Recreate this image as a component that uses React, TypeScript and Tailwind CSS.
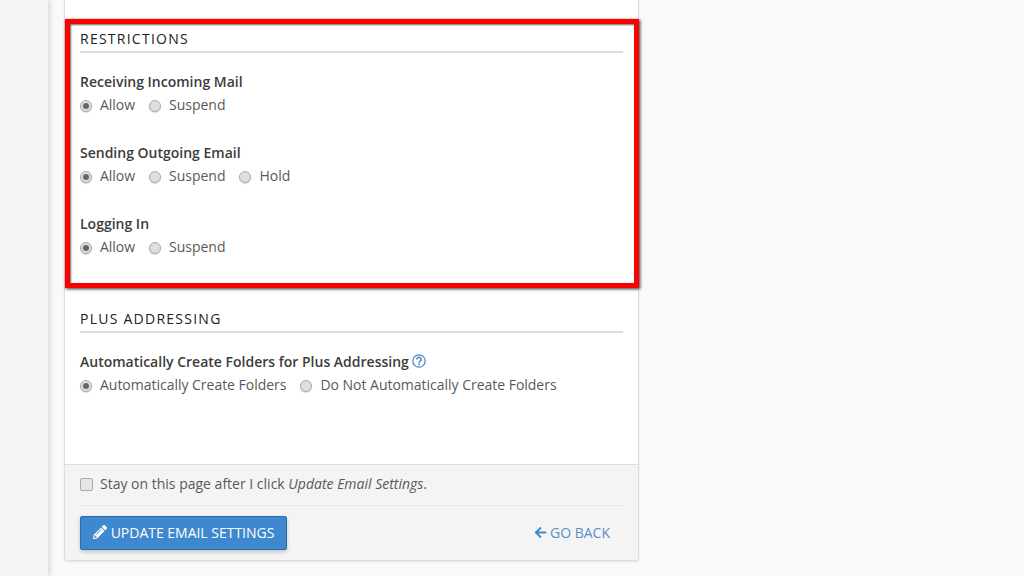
import { FaArrowLeft, FaPencilAlt } from "react-icons/fa";

const Radio = ({ label, checked = false }: { label: string; checked?: boolean }) => (
  <label className="flex items-center">
    <span className="mt-[4px] flex h-[12px] w-[12px] items-center justify-center rounded-full border border-[#ababab] bg-[#dedede] shadow-[0_1px_1px_rgba(0,0,0,0.15)]">
      {checked ? <span className="h-[6px] w-[6px] rounded-full bg-[#666]" /> : null}
    </span>
    <span className="ml-[8px] tracking-[-0.02px]">{label}</span>
  </label>
);

const Field = ({ label, children }: { label: React.ReactNode; children: React.ReactNode }) => (
  <div className="h-[71px]">
    <div className="flex h-[20px] items-center font-semibold text-[#3c3c3c]">{label}</div>
    <div className="mt-[3px] flex h-[20px] items-center gap-[14px] text-[#595959]">{children}</div>
  </div>
);

const SectionTitle = ({ children }: { children: React.ReactNode }) => (
  <h2 className="flex h-[26px] items-center border-b-2 border-[#ddd] pb-[2px] text-[14px] font-medium tracking-[1.25px] text-[#222]">
    {children}
  </h2>
);

export default function App() {
  return (
    <div className="flex h-[576px] overflow-hidden bg-[#f9f9f9] font-['Open_Sans',sans-serif] text-[14px]">
      <div className="h-full w-[48px] shrink-0 bg-[#f4f4f4] shadow-[3px_0_4px_rgba(0,0,0,0.1)]" />
      <div className="relative ml-[16px] h-[561px] w-[575px] shrink-0">
        <div className="flex h-full flex-col rounded-b-[3px] border-x border-b border-[#ddd] bg-white shadow-[0_1px_2px_rgba(0,0,0,0.08)]">
          <div className="flex-1 px-[15px] pt-[27px]">
            <SectionTitle>RESTRICTIONS</SectionTitle>
            <div className="mt-[18px]">
              <Field label="Receiving Incoming Mail">
                <Radio label="Allow" checked />
                <Radio label="Suspend" />
              </Field>
              <Field label="Sending Outgoing Email">
                <Radio label="Allow" checked />
                <Radio label="Suspend" />
                <Radio label="Hold" />
              </Field>
              <Field label="Logging In">
                <Radio label="Allow" checked />
                <Radio label="Suspend" />
              </Field>
            </div>
            <div className="mt-[23px]">
              <SectionTitle>PLUS ADDRESSING</SectionTitle>
            </div>
            <div className="mt-[18px]">
              <Field
                label={
                  <>
                    Automatically Create Folders for Plus Addressing
                    <svg viewBox="0 0 14 14" className="ml-[3px] h-[14px] w-[14px] text-[#4a8cca]" fill="none" stroke="currentColor">
                      <circle cx="7" cy="7" r="6.2" strokeWidth="1.3" />
                      <path d="M4.9 5.5a2.1 2.1 0 1 1 3.3 1.6c-.8.5-1.2.9-1.2 1.6" strokeWidth="1.6" />
                      <path d="M7 9.6v1.6" strokeWidth="1.6" />
                    </svg>
                  </>
                }
              >
                <Radio label="Automatically Create Folders" checked />
                <Radio label="Do Not Automatically Create Folders" />
              </Field>
            </div>
          </div>
          <div className="h-[96px] rounded-b-[3px] border-t border-[#ddd] bg-[#f4f4f4] px-[15px]">
            <div className="flex h-[41px] items-center border-b border-[#e8e8e8] pb-[1px] text-[#595959]">
              <span className="h-[13px] w-[13px] rounded-[2px] border border-[#a8a8a8] bg-[#e6e6e6]" />
              <span className="ml-[7px] -translate-y-[1px]">
                Stay on this page after I click <em>Update Email Settings</em>.
              </span>
            </div>
            <div className="mt-[10px] flex items-center justify-between">
              <button className="flex h-[34px] w-[207px] items-center justify-center rounded-[2px] border border-[#2e6da4] bg-[#3d88ce] pb-[2px] tracking-[-0.02px] text-white shadow-[0_2px_4px_rgba(0,0,0,0.2)]">
                <FaPencilAlt className="mr-[4px] h-[14px] w-[14px]" />
                UPDATE EMAIL SETTINGS
              </button>
              <a className="mr-[13px] flex items-center pb-[2px] text-[#5b8fc9]">
                <FaArrowLeft className="mr-[3px] h-[13px] w-[13px] text-[#3d85c6]" />
                GO BACK
              </a>
            </div>
          </div>
        </div>
        <div className="absolute left-[1px] top-[19px] h-[269px] w-[574px] border-[5px] border-[#ff0000] shadow-[1px_1px_3px_rgba(0,0,0,0.8),inset_1px_1px_2px_rgba(0,0,0,0.6)]" />
      </div>
    </div>
  );
}
